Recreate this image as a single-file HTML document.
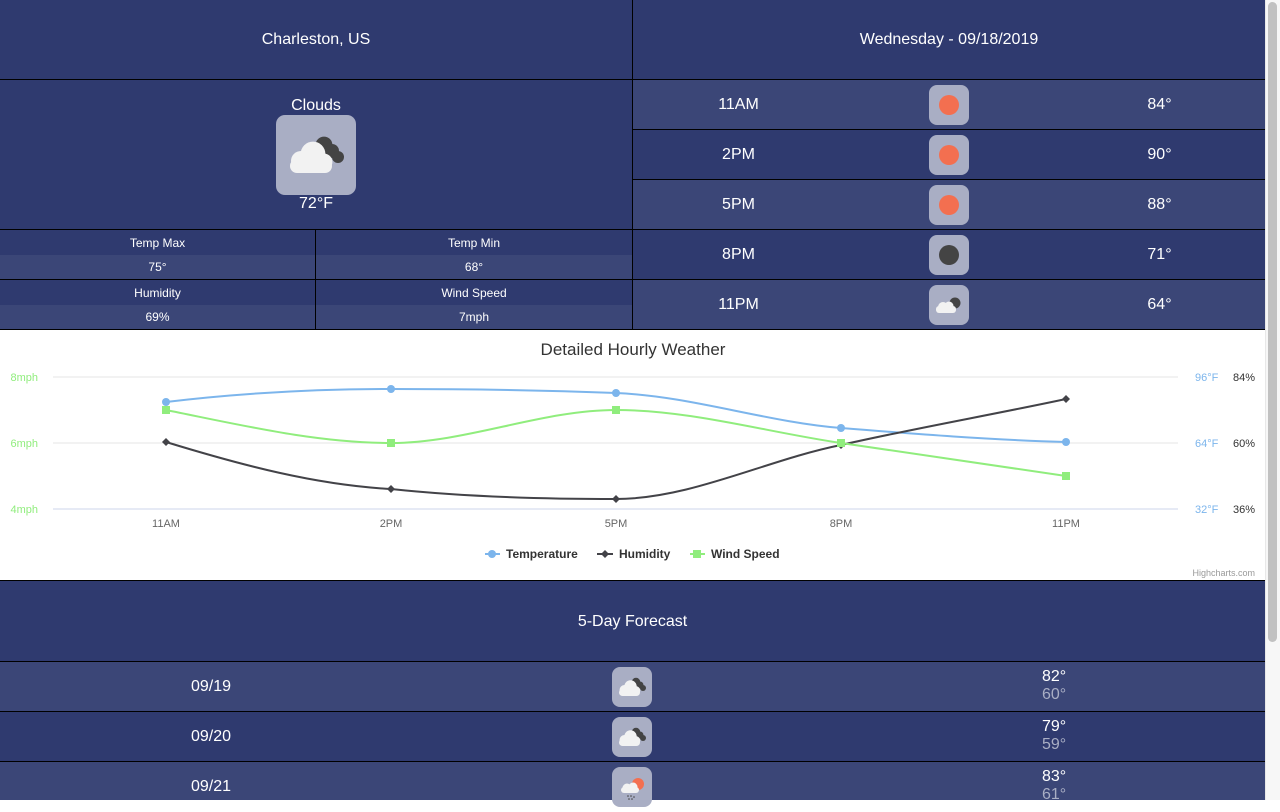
<!DOCTYPE html>
<html><head><meta charset="utf-8"><style>
*{margin:0;padding:0;box-sizing:border-box}
body{width:1280px;height:800px;overflow:hidden;background:#fff;font-family:"Liberation Sans",Arial,sans-serif;color:#fff;position:relative}
.a{position:absolute}
.dk{background:#2f3a6f}
.lt{background:#3b4677}
.bl{background:#000}
.c{display:flex;align-items:center;justify-content:center}
.ic{position:absolute;width:40px;height:40px;border-radius:8px;background:#a9aec4}
.sb{position:absolute;left:1265px;top:0;width:15px;height:800px;background:#f7f7f7;border-left:1px solid #e8e8e8}
.th{position:absolute;left:1268px;top:2px;width:9px;height:640px;border-radius:5px;background:#c1c1c1}
</style></head><body>
<svg width="0" height="0" style="position:absolute"><defs>
<g id="cl"><circle cx="24" cy="15" r="4.2" fill="#444"/><circle cx="28" cy="18" r="3.5" fill="#444"/><circle cx="31" cy="21" r="3" fill="#444"/>
<circle cx="12.5" cy="23" r="5" fill="#f2f2f2"/><circle cx="18.5" cy="19.5" r="6.2" fill="#f2f2f2"/><circle cx="24" cy="23.5" r="4.2" fill="#f2f2f2"/><rect x="7" y="22" width="21" height="7" rx="3.5" fill="#f2f2f2"/></g>
</defs></svg>

<div class="a dk c" style="left:0;top:0;width:632px;height:79px;font-size:16px">Charleston, US</div>
<div class="a dk c" style="left:633px;top:0;width:632px;height:79px;font-size:16px">Wednesday - 09/18/2019</div>
<div class="a bl" style="left:632px;top:0;width:1px;height:330px"></div>
<div class="a bl" style="left:0;top:79px;width:1265px;height:1px"></div>
<div class="a dk" style="left:0;top:80px;width:632px;height:149px"></div>
<div class="a" style="left:0;top:97px;width:632px;text-align:center;font-size:16px">Clouds</div>
<div class="a" style="left:276px;top:115px;width:80px;height:80px;border-radius:9px;background:#a9aec4"><svg width="80" height="80" viewBox="0 0 40 40"><use href="#cl"/></svg></div>
<div class="a" style="left:0;top:195px;width:632px;text-align:center;font-size:16px">72°F</div>
<div class="a bl" style="left:0;top:229px;width:1265px;height:1px"></div>
<div class="a dk c" style="left:0;top:230px;width:315px;height:25px;font-size:12px">Temp Max</div>
<div class="a lt c" style="left:0;top:255px;width:315px;height:24px;font-size:12px">75°</div>
<div class="a dk c" style="left:316px;top:230px;width:316px;height:25px;font-size:12px">Temp Min</div>
<div class="a lt c" style="left:316px;top:255px;width:316px;height:24px;font-size:12px">68°</div>
<div class="a bl" style="left:0;top:279px;width:632px;height:1px"></div>
<div class="a dk c" style="left:0;top:280px;width:315px;height:25px;font-size:12px">Humidity</div>
<div class="a lt c" style="left:0;top:305px;width:315px;height:24px;font-size:12px">69%</div>
<div class="a dk c" style="left:316px;top:280px;width:316px;height:25px;font-size:12px">Wind Speed</div>
<div class="a lt c" style="left:316px;top:305px;width:316px;height:24px;font-size:12px">7mph</div>
<div class="a bl" style="left:315px;top:230px;width:1px;height:100px"></div>
<div class="a bl" style="left:0;top:329px;width:1265px;height:1px"></div>

<div class="a lt" style="left:633px;top:80px;width:632px;height:49px"></div>
<div class="a dk" style="left:633px;top:130px;width:632px;height:49px"></div>
<div class="a lt" style="left:633px;top:180px;width:632px;height:49px"></div>
<div class="a dk" style="left:633px;top:230px;width:632px;height:49px"></div>
<div class="a lt" style="left:633px;top:280px;width:632px;height:49px"></div>
<div class="a bl" style="left:633px;top:129px;width:632px;height:1px"></div>
<div class="a bl" style="left:633px;top:179px;width:632px;height:1px"></div>
<div class="a bl" style="left:633px;top:229px;width:632px;height:1px"></div>
<div class="a bl" style="left:633px;top:279px;width:632px;height:1px"></div>

<div class="a" style="left:633px;top:96px;width:211px;text-align:center;font-size:16px">11AM</div>
<div class="a" style="left:633px;top:146px;width:211px;text-align:center;font-size:16px">2PM</div>
<div class="a" style="left:633px;top:196px;width:211px;text-align:center;font-size:16px">5PM</div>
<div class="a" style="left:633px;top:246px;width:211px;text-align:center;font-size:16px">8PM</div>
<div class="a" style="left:633px;top:296px;width:211px;text-align:center;font-size:16px">11PM</div>
<div class="a" style="left:1054px;top:96px;width:211px;text-align:center;font-size:16px">84°</div>
<div class="a" style="left:1054px;top:146px;width:211px;text-align:center;font-size:16px">90°</div>
<div class="a" style="left:1054px;top:196px;width:211px;text-align:center;font-size:16px">88°</div>
<div class="a" style="left:1054px;top:246px;width:211px;text-align:center;font-size:16px">71°</div>
<div class="a" style="left:1054px;top:296px;width:211px;text-align:center;font-size:16px">64°</div>
<div class="ic" style="left:929px;top:85px"><svg width="40" height="40"><circle cx="20" cy="20" r="10" fill="#f36f50"/></svg></div>
<div class="ic" style="left:929px;top:135px"><svg width="40" height="40"><circle cx="20" cy="20" r="10" fill="#f36f50"/></svg></div>
<div class="ic" style="left:929px;top:185px"><svg width="40" height="40"><circle cx="20" cy="20" r="10" fill="#f36f50"/></svg></div>
<div class="ic" style="left:929px;top:235px"><svg width="40" height="40"><circle cx="20" cy="20" r="10" fill="#444"/></svg></div>
<div class="ic" style="left:929px;top:285px"><svg width="40" height="40"><circle cx="26" cy="18" r="5.5" fill="#444"/><circle cx="14" cy="22" r="5" fill="#f2f2f2"/><circle cx="20" cy="21" r="4.5" fill="#f2f2f2"/><rect x="7" y="21" width="20" height="7" rx="3" fill="#f2f2f2"/></svg></div>

<svg class="a" style="left:0;top:330px" width="1265" height="251" viewBox="0 330 1265 251">
<rect x="0" y="330" width="1265" height="251" fill="#fff"/>
<text x="633" y="355" text-anchor="middle" font-size="17" fill="#333" font-family="Liberation Sans">Detailed Hourly Weather</text>
<line x1="53" y1="377" x2="1178" y2="377" stroke="#e6e6e6"/>
<line x1="53" y1="443" x2="1178" y2="443" stroke="#e6e6e6"/>
<line x1="53" y1="509" x2="1178" y2="509" stroke="#ccd6eb"/>
<g font-size="11" font-family="Liberation Sans">
<text x="38" y="381" text-anchor="end" fill="#90ed7d">8mph</text>
<text x="38" y="447" text-anchor="end" fill="#90ed7d">6mph</text>
<text x="38" y="513" text-anchor="end" fill="#90ed7d">4mph</text>
<text x="1195" y="381" fill="#7cb5ec">96°F</text>
<text x="1195" y="447" fill="#7cb5ec">64°F</text>
<text x="1195" y="513" fill="#7cb5ec">32°F</text>
<text x="1233" y="381" fill="#333">84%</text>
<text x="1233" y="447" fill="#333">60%</text>
<text x="1233" y="513" fill="#333">36%</text>
<g fill="#666" text-anchor="middle">
<text x="166" y="527">11AM</text><text x="391" y="527">2PM</text><text x="616" y="527">5PM</text><text x="841" y="527">8PM</text><text x="1066" y="527">11PM</text></g>
<text x="1255" y="576" text-anchor="end" font-size="9" fill="#999">Highcharts.com</text>
</g>
<path d="M166,402 C241,393 316,389 391,389 C466,389 541,390 616,393 C691,396 766,422 841,428 C916,434 991,440 1066,442" fill="none" stroke="#7cb5ec" stroke-width="2"/>
<path d="M166,442 C241,465 316,485 391,489 C466,497 541,499 616,499 C691,499 766,460 841,445 C916,428 991,415 1066,399" fill="none" stroke="#434348" stroke-width="2"/>
<path d="M166,410 C241,425 316,443 391,443 C466,443 541,410 616,410 C691,410 766,432 841,443 C916,454 991,465 1066,476" fill="none" stroke="#90ed7d" stroke-width="2"/>
<g fill="#7cb5ec"><circle cx="166" cy="402" r="4"/><circle cx="391" cy="389" r="4"/><circle cx="616" cy="393" r="4"/><circle cx="841" cy="428" r="4"/><circle cx="1066" cy="442" r="4"/></g>
<g fill="#434348"><path d="M166,438l4,4-4,4-4-4z"/><path d="M391,485l4,4-4,4-4-4z"/><path d="M616,495l4,4-4,4-4-4z"/><path d="M841,441l4,4-4,4-4-4z"/><path d="M1066,395l4,4-4,4-4-4z"/></g>
<g fill="#90ed7d"><rect x="162" y="406" width="8" height="8"/><rect x="387" y="439" width="8" height="8"/><rect x="612" y="406" width="8" height="8"/><rect x="837" y="439" width="8" height="8"/><rect x="1062" y="472" width="8" height="8"/></g>
<g font-size="12" font-weight="bold" fill="#333" font-family="Liberation Sans">
<line x1="485" y1="554" x2="500" y2="554" stroke="#7cb5ec" stroke-width="2"/><circle cx="492" cy="554" r="4" fill="#7cb5ec"/><text x="506" y="558">Temperature</text>
<line x1="597" y1="554" x2="613" y2="554" stroke="#434348" stroke-width="2"/><path d="M605,550l4,4-4,4-4-4z" fill="#434348"/><text x="619" y="558">Humidity</text>
<line x1="690" y1="554" x2="705" y2="554" stroke="#90ed7d" stroke-width="2"/><rect x="693" y="550" width="8" height="8" fill="#90ed7d"/><text x="711" y="558">Wind Speed</text>
</g>
</svg>

<div class="a bl" style="left:0;top:580px;width:1265px;height:1px"></div>
<div class="a dk c" style="left:0;top:581px;width:1265px;height:80px;font-size:16px;padding-top:2px">5-Day Forecast</div>
<div class="a bl" style="left:0;top:661px;width:1265px;height:1px"></div>
<div class="a lt" style="left:0;top:662px;width:1265px;height:49px"></div>
<div class="a bl" style="left:0;top:711px;width:1265px;height:1px"></div>
<div class="a dk" style="left:0;top:712px;width:1265px;height:49px"></div>
<div class="a bl" style="left:0;top:761px;width:1265px;height:1px"></div>
<div class="a lt" style="left:0;top:762px;width:1265px;height:38px"></div>
<div class="a" style="left:0;top:678px;width:422px;text-align:center;font-size:16px">09/19</div>
<div class="a" style="left:0;top:728px;width:422px;text-align:center;font-size:16px">09/20</div>
<div class="a" style="left:0;top:778px;width:422px;text-align:center;font-size:16px">09/21</div>
<div class="ic" style="left:612px;top:667px"><svg width="40" height="40"><use href="#cl"/></svg></div>
<div class="ic" style="left:612px;top:717px"><svg width="40" height="40"><use href="#cl"/></svg></div>
<div class="ic" style="left:612px;top:767px"><svg width="40" height="40"><circle cx="26" cy="17" r="6" fill="#f36f50"/><circle cx="15" cy="21" r="4.5" fill="#f2f2f2"/><circle cx="21" cy="20" r="4.5" fill="#f2f2f2"/><rect x="9" y="20" width="18" height="6" rx="3" fill="#f2f2f2"/><g fill="#444"><circle cx="16" cy="29" r=".8"/><circle cx="19" cy="29" r=".8"/><circle cx="22" cy="30" r=".8"/><circle cx="17" cy="32" r=".8"/><circle cx="20" cy="32" r=".8"/></g></svg></div>
<div class="a" style="left:1042px;top:668px;font-size:16px;line-height:18px">82°<br><span style="color:#a9aec4">60°</span></div>
<div class="a" style="left:1042px;top:718px;font-size:16px;line-height:18px">79°<br><span style="color:#a9aec4">59°</span></div>
<div class="a" style="left:1042px;top:768px;font-size:16px;line-height:18px">83°<br><span style="color:#a9aec4">61°</span></div>

<div class="sb"></div><div class="th"></div>
</body></html>
